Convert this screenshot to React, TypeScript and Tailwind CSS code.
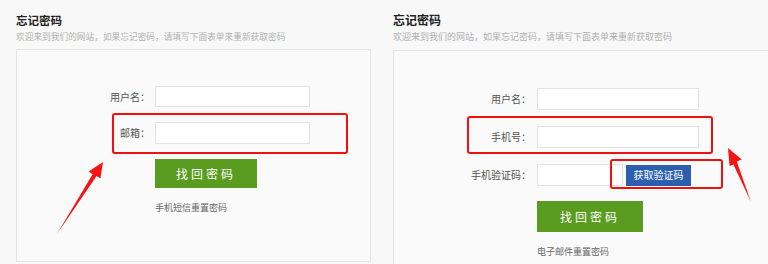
import React from 'react';

const font = { fontFamily: '"Noto Sans CJK SC", "Noto Sans", sans-serif' };

const Field: React.FC<{ label: string; labelW: string; inputCls: string }> = ({ label, labelW, inputCls }) => (
    <div className="flex items-center">
        <span className={`${labelW} text-right text-[10px] text-[#555] leading-none`}>{label}</span>
        <div className={`bg-white border border-[#e2e2e2] ${inputCls}`}></div>
    </div>
);

const Annotations = () => (
    <svg className="absolute inset-0 pointer-events-none" width="768" height="264" viewBox="0 0 768 264">
        <g fill="none" stroke="#f01010" strokeWidth="2">
            <rect x="113" y="114" width="234" height="39" rx="2" />
            <rect x="468" y="117" width="244" height="36" rx="2" />
            <rect x="611" y="160" width="111" height="28" rx="2" />
        </g>
        <g fill="#f51414">
            <polygon points="57,234 96.6,176 100.4,178.4 103,162 88.6,171.6 92.6,174.2" />
            <polygon points="751,202 736.8,161.6 741.8,159.4 728,148 729.6,166 733.4,164.4" />
        </g>
    </svg>
);

export default function App() {
    return (
        <div className="relative w-[768px] h-[264px] overflow-hidden bg-[#f8f8f8] flex" style={font}>
            {/* left: email reset */}
            <div className="w-[384px] pl-[16px] pt-[12px] flex flex-col">
                <h2 className="text-[11.5px] font-bold leading-[16px] text-[#222]">忘记密码</h2>
                <p className="mt-[3px] text-[8.7px] leading-[12px] text-[#b0b0b0]">欢迎来到我们的网站，如果忘记密码，请填写下面表单来重新获取密码</p>
                <div className="mt-[6px] w-[355px] h-[213px] border border-[#e4e4e4] bg-[#fafafa] pt-[36px] flex flex-col gap-[15px]">
                    <Field label="用户名：" labelW="w-[133px] mr-[5px]" inputCls="w-[155px] h-[21px]" />
                    <Field label="邮箱：" labelW="w-[133px] mr-[5px]" inputCls="w-[155px] h-[22px]" />
                    <div className="pl-[138px]">
                        <button className="w-[102px] h-[29px] bg-[#599c1f] text-white text-[12px] tracking-[3px] leading-none">找回密码</button>
                        <p className="mt-[14px] text-[9px] leading-[12px] text-[#666]">手机短信重置密码</p>
                    </div>
                </div>
            </div>

            {/* right: sms reset */}
            <div className="flex-1 pl-[9px] pt-[12px] flex flex-col border-t-[3px] border-white -mt-[3px]">
                <h2 className="text-[12px] font-bold leading-[16px] text-[#222]">忘记密码</h2>
                <p className="mt-[3px] text-[9px] leading-[12px] text-[#b0b0b0]">欢迎来到我们的网站，如果忘记密码，请填写下面表单来重新获取密码</p>
                <div className="mt-[7px] flex-1 border-l border-t border-[#e4e4e4] bg-[#fafafa] pt-[37px] flex flex-col gap-[16px]">
                    <Field label="用户名：" labelW="w-[137px] mr-[6px]" inputCls="w-[162px] h-[22px]" />
                    <Field label="手机号：" labelW="w-[137px] mr-[6px]" inputCls="w-[162px] h-[22px]" />
                    <div className="flex items-center">
                        <span className="w-[137px] mr-[6px] text-right text-[10px] text-[#555] leading-none">手机验证码：</span>
                        <div className="w-[86px] h-[22px] bg-white border border-[#e2e2e2]"></div>
                        <button className="ml-[3px] w-[65px] h-[21px] bg-[#2c5fad] text-white text-[10px] leading-none">获取验证码</button>
                    </div>
                    <div className="pl-[143px] -mt-[1px]">
                        <button className="w-[106px] h-[31px] bg-[#599c1f] text-white text-[12px] tracking-[3px] leading-none">找回密码</button>
                        <p className="mt-[14px] text-[9px] leading-[12px] text-[#666]">电子邮件重置密码</p>
                    </div>
                </div>
            </div>

            <Annotations />
        </div>
    );
}
